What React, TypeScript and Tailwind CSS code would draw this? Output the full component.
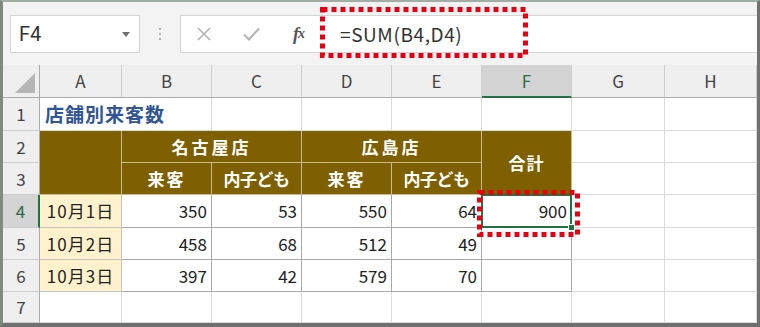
import React from 'react'

const cjk = "font-['Noto_Sans_CJK_JP',sans-serif]"

function ColHead({ label, active }: { label: string; active?: boolean }) {
  return (
    <div
      className={
        'flex items-center justify-center border-r border-[#cdcdcd] text-[17px] ' +
        (active
          ? 'bg-[#d4d4d4] text-[#2b6a45] border-b-2 border-b-[#217346]'
          : 'bg-[#efefef] text-[#444] border-b border-b-[#ababab]')
      }
    >
      {label}
    </div>
  )
}

function RowHead({ label, active }: { label: string; active?: boolean }) {
  return (
    <div
      className={
        'flex items-center justify-center border-b border-[#cdcdcd] text-[17px] ' +
        (active
          ? 'bg-[#d4d4d4] text-[#2b6a45] border-r-2 border-r-[#217346]'
          : 'bg-[#efefef] text-[#444] border-r border-r-[#ababab]')
      }
    >
      {label}
    </div>
  )
}

function Blank() {
  return <div className="bg-white border-r border-b border-[#dadada]" />
}

function Brown({ children, span = '' }: { children?: React.ReactNode; span?: string }) {
  return (
    <div
      className={
        'flex items-center justify-center bg-[#7f6000] text-white font-bold text-[17px] border-r border-b border-[#cdbb8c] ' +
        span
      }
    >
      {children}
    </div>
  )
}

function Day({ children }: { children: React.ReactNode }) {
  return (
    <div className="flex items-center justify-center bg-[#fff2cc] text-[17px] text-[#222] tracking-[1px] border-r border-b border-[#c4c4c4]">
      {children}
    </div>
  )
}

function Num({ children }: { children?: React.ReactNode }) {
  return (
    <div className="flex items-center justify-end pr-[4px] bg-white text-[17px] text-[#222] border-r border-b border-[#a9a9a9]">
      {children}
    </div>
  )
}

export default function App() {
  return (
    <div className="relative w-[760px] h-[327px] overflow-hidden bg-[#f3f3f3] border-t-2 border-t-[#a3aca5] border-l-[3px] border-l-[#7f8b82] border-r-[3px] border-r-[#707070] border-b-[4px] border-b-[#707070] font-['Roboto',sans-serif]">
      {/* formula bar */}
      <div className="h-[63px] flex items-start pt-[13px]">
        <div className="ml-[7px] w-[130px] h-[38px] bg-white border border-[#d4d4d4] flex items-center justify-between pl-[8px] pr-[9px]">
          <span className="text-[20px] text-[#333]">F4</span>
          <svg width="8" height="5" viewBox="0 0 8 5">
            <path d="M0 0 L8 0 L4 5 Z" fill="#6f6f6f" />
          </svg>
        </div>
        <div className="w-[40px] h-[38px] flex flex-col items-center justify-center gap-[3px]">
          <span className="w-[2px] h-[2px] bg-[#b0b0b0]" />
          <span className="w-[2px] h-[2px] bg-[#b0b0b0]" />
          <span className="w-[2px] h-[2px] bg-[#b0b0b0]" />
        </div>
        <div className="flex-1 h-[38px] bg-white border border-[#d4d4d4] border-r-0 flex items-center">
          <div className="w-[46px] flex justify-center">
            <svg width="14" height="14" viewBox="0 0 14 14">
              <path d="M1 1 L13 13 M13 1 L1 13" stroke="#b3b3b3" strokeWidth="1.6" />
            </svg>
          </div>
          <div className="w-[48px] flex justify-center">
            <svg width="17" height="14" viewBox="0 0 17 14">
              <path d="M1 7.5 L6 12.5 L16 1.5" fill="none" stroke="#b3b3b3" strokeWidth="2" />
            </svg>
          </div>
          <div className="w-[48px] flex justify-center font-['Liberation_Serif',serif] italic font-bold text-[#555] text-[18px] leading-none">
            f<span className="text-[14px] -ml-[1px] translate-y-[2px] inline-block">x</span>
          </div>
          <div className={'ml-[17px] text-[19px] text-[#333] tracking-[0.6px] ' + cjk}>=SUM(B4,D4)</div>
        </div>
      </div>

      {/* sheet */}
      <div
        className={
          'grid grid-cols-[37px_82px_90px_90px_90px_90px_90px_93px_92px] grid-rows-[33px_33px_32px_32px_33px_32px_32px_31px] bg-white ' +
          cjk
        }
      >
        {/* column headers */}
        <div className="relative bg-[#efefef] border-r border-r-[#ababab] border-b border-b-[#ababab]">
          <svg className="absolute right-[4px] bottom-[4px]" width="20" height="20" viewBox="0 0 20 20">
            <path d="M20 0 L20 20 L0 20 Z" fill="#b5b5b5" />
          </svg>
        </div>
        <ColHead label="A" />
        <ColHead label="B" />
        <ColHead label="C" />
        <ColHead label="D" />
        <ColHead label="E" />
        <ColHead label="F" active />
        <ColHead label="G" />
        <ColHead label="H" />

        {/* row 1 */}
        <RowHead label="1" />
        <div className="col-span-2 flex items-center pl-[5px] bg-white border-r border-b border-[#dadada] text-[19px] font-bold text-[#2f5597] tracking-[1px]">
          店舗別来客数
        </div>
        <Blank />
        <Blank />
        <Blank />
        <Blank />
        <Blank />
        <Blank />

        {/* row 2 */}
        <RowHead label="2" />
        <Brown span="row-span-2" />
        <Brown span="col-span-2 tracking-[3px]">名古屋店</Brown>
        <Brown span="col-span-2 tracking-[3px]">広島店</Brown>
        <Brown span="row-span-2 tracking-[1px]">合計</Brown>
        <Blank />
        <Blank />

        {/* row 3 */}
        <RowHead label="3" />
        <Brown span="tracking-[2px]">来客</Brown>
        <Brown span="tracking-[-0.5px]">内子ども</Brown>
        <Brown span="tracking-[2px]">来客</Brown>
        <Brown span="tracking-[-0.5px]">内子ども</Brown>
        <Blank />
        <Blank />

        {/* row 4 */}
        <RowHead label="4" active />
        <Day>10月1日</Day>
        <Num>350</Num>
        <Num>53</Num>
        <Num>550</Num>
        <Num>64</Num>
        <div className="relative flex items-center justify-end pr-[4px] bg-white text-[17px] text-[#222] border-r border-b border-[#a9a9a9]">
          900
          <div className="absolute -left-[1px] -top-[1px] -right-[1px] -bottom-[1px] border-2 border-[#217346]" />
          <div className="absolute -right-[4px] -bottom-[4px] w-[7px] h-[7px] bg-[#217346] border border-white" />
        </div>
        <Blank />
        <Blank />

        {/* row 5 */}
        <RowHead label="5" />
        <Day>10月2日</Day>
        <Num>458</Num>
        <Num>68</Num>
        <Num>512</Num>
        <Num>49</Num>
        <Num />
        <Blank />
        <Blank />

        {/* row 6 */}
        <RowHead label="6" />
        <Day>10月3日</Day>
        <Num>397</Num>
        <Num>42</Num>
        <Num>579</Num>
        <Num>70</Num>
        <Num />
        <Blank />
        <Blank />

        {/* row 7 */}
        <RowHead label="7" />
        <Blank />
        <Blank />
        <Blank />
        <Blank />
        <Blank />
        <Blank />
        <Blank />
        <Blank />
      </div>

      {/* red dotted callouts */}
      <svg className="absolute -left-[3px] -top-[2px] pointer-events-none" width="760" height="327">
        <rect x="322.5" y="9.5" width="203" height="46" fill="none" stroke="#e60012" strokeWidth="5" strokeDasharray="5 4" />
        <rect x="479.5" y="192.5" width="98" height="42" fill="none" stroke="#e60012" strokeWidth="5" strokeDasharray="5 4" />
      </svg>
    </div>
  )
}
